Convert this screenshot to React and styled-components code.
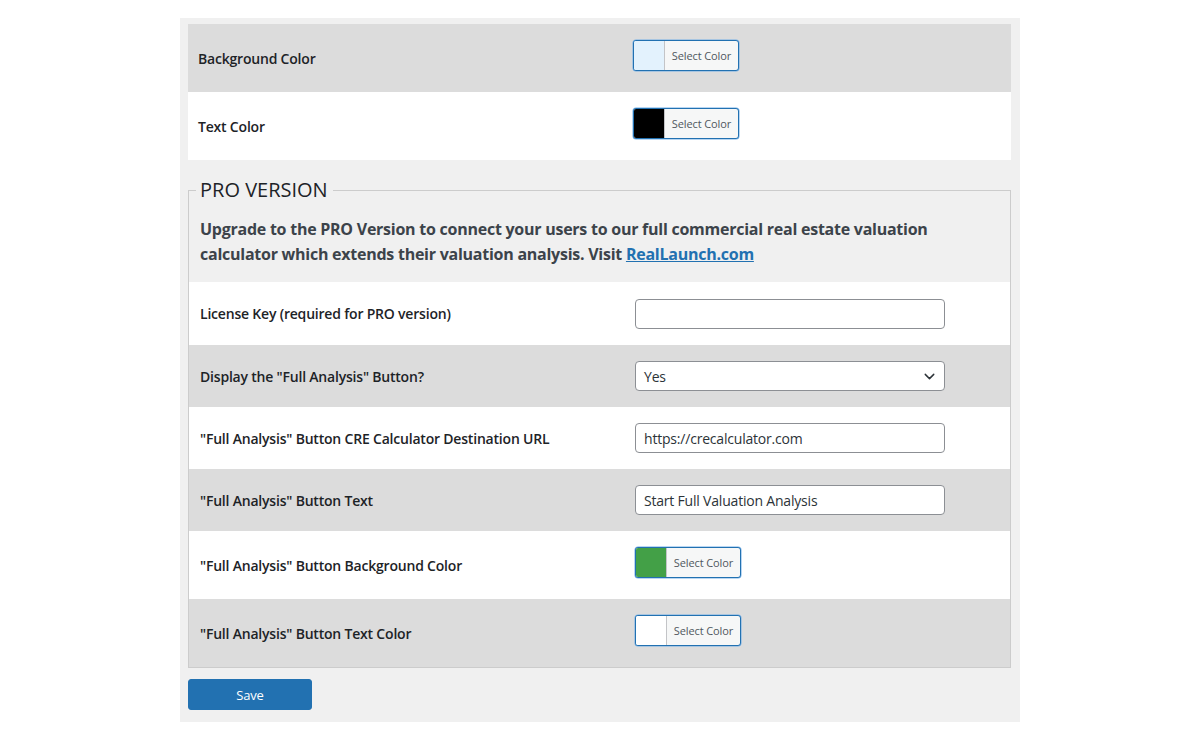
import React from 'react';
import styled, { createGlobalStyle } from 'styled-components';
import { ChevronDown } from 'lucide-react';

const GlobalStyle = createGlobalStyle`
  html, body {
    margin: 0;
    padding: 0;
    background: #ffffff;
  }
  body {
    font-family: "Open Sans", "Noto Sans", "Liberation Sans", sans-serif;
    color: #1d2327;
  }
  * {
    box-sizing: border-box;
  }
`;

const topRows = [
  { label: 'Background Color', swatch: '#e3f2fd' },
  { label: 'Text Color', swatch: '#000000' },
];

const SettingsPage = () => {
  return (
    <>
      <GlobalStyle />
      <Wrap>
        <Table>
          {topRows.map((row, i) => (
            <Row key={row.label} $grey={i % 2 === 0} $tall>
              <Label>{row.label}</Label>
              <Cell>
                <ColorPicker swatch={row.swatch} />
              </Cell>
            </Row>
          ))}
        </Table>

        <ProBox>
          <Legend>PRO VERSION</Legend>
          <Intro>
            Upgrade to the PRO Version to connect your users to our full commercial real estate valuation
            calculator which extends their valuation analysis. Visit <Link href="#">RealLaunch.com</Link>
          </Intro>

          <Row $inset $first>
            <Label $inset>License Key (required for PRO version)</Label>
            <Cell>
              <TextInput type="text" defaultValue="" />
            </Cell>
          </Row>
          <Row $inset $grey>
            <Label $inset>Display the "Full Analysis" Button?</Label>
            <Cell>
              <SelectBox>
                <span>Yes</span>
                <ChevronDown size={17} strokeWidth={2} color="#2c3338" />
              </SelectBox>
            </Cell>
          </Row>
          <Row $inset>
            <Label $inset>"Full Analysis" Button CRE Calculator Destination URL</Label>
            <Cell>
              <TextInput type="text" defaultValue="https://crecalculator.com" />
            </Cell>
          </Row>
          <Row $inset $grey>
            <Label $inset>"Full Analysis" Button Text</Label>
            <Cell>
              <TextInput type="text" defaultValue="Start Full Valuation Analysis" />
            </Cell>
          </Row>
          <Row $inset $tall>
            <Label $inset>"Full Analysis" Button Background Color</Label>
            <Cell>
              <ColorPicker swatch="#43a047" />
            </Cell>
          </Row>
          <Row $inset $tall $grey>
            <Label $inset>"Full Analysis" Button Text Color</Label>
            <Cell>
              <ColorPicker swatch="#ffffff" />
            </Cell>
          </Row>
        </ProBox>

        <SaveButton type="button">Save</SaveButton>
      </Wrap>
    </>
  );
};

const ColorPicker = ({ swatch }) => (
  <PickerButton type="button">
    <Swatch $color={swatch} />
    <PickerText>Select Color</PickerText>
  </PickerButton>
);

const Wrap = styled.div`
  width: 840px;
  margin: 18px 0 0 180px;
  padding: 6px 9px 12px 8px;
  background: #f0f0f0;
`;

const Table = styled.div`
  display: flex;
  flex-direction: column;
`;

const Row = styled.div`
  display: grid;
  grid-template-columns: ${(p) => (p.$inset ? '446px' : '445px')} 1fr;
  align-items: center;
  min-height: ${(p) => (p.$tall ? '68px' : p.$first ? '63px' : '62px')};
  background: ${(p) => (p.$grey ? '#dcdcdc' : '#ffffff')};
`;

const Label = styled.div`
  padding-left: ${(p) => (p.$inset ? '11px' : '10px')};
  font-size: 14px;
  font-weight: 600;
  color: #1d2327;
  letter-spacing: -0.2px;
`;

const Cell = styled.div`
  display: flex;
  align-items: center;
`;

const PickerButton = styled.button`
  display: flex;
  align-items: stretch;
  width: 106px;
  height: 31px;
  margin: 0 0 6px;
  padding: 0;
  border: 1px solid #2271b1;
  border-radius: 3px;
  overflow: hidden;
  background: #f6f7f7;
  box-shadow: 0 0 0 0.5px #72aee6;
  cursor: pointer;
`;

const Swatch = styled.span`
  width: 31px;
  background: ${(p) => p.$color};
  border-right: 1px solid #c3c4c7;
`;

const PickerText = styled.span`
  flex: 1;
  display: flex;
  align-items: center;
  justify-content: center;
  font-family: "Open Sans", "Noto Sans", sans-serif;
  font-size: 11px;
  color: #50575e;
  letter-spacing: -0.1px;
`;

const ProBox = styled.fieldset`
  margin: 18px 0 0;
  padding: 0;
  border: 1px solid #cccccc;
  min-width: 0;
`;

const Legend = styled.legend`
  margin-left: 7px;
  padding: 0 5px 0 4px;
  font-size: 20px;
  line-height: 24px;
  font-weight: 400;
  color: #1d2327;
  letter-spacing: 0;
`;

const Intro = styled.p`
  margin: 0;
  padding: 15px 12px 15px 11px;
  font-size: 16px;
  line-height: 25px;
  font-weight: 700;
  color: #3c434a;
  letter-spacing: -0.25px;
`;

const Link = styled.a`
  color: #2271b1;
  text-decoration: underline;
`;

const TextInput = styled.input`
  width: 310px;
  height: 30px;
  padding: 0 8px;
  border: 1px solid #8c8f94;
  border-radius: 4px;
  background: #ffffff;
  font-family: "Open Sans", "Noto Sans", sans-serif;
  font-size: 14px;
  color: #2c3338;
  letter-spacing: -0.2px;
  outline: none;
`;

const SelectBox = styled.div`
  display: flex;
  align-items: center;
  justify-content: space-between;
  width: 310px;
  height: 30px;
  padding: 0 6px 0 8px;
  border: 1px solid #8c8f94;
  border-radius: 4px;
  background: #ffffff;
  font-size: 14px;
  color: #2c3338;
  letter-spacing: -0.2px;
`;

const SaveButton = styled.button`
  display: block;
  width: 124px;
  height: 31px;
  margin-top: 11px;
  border: 1px solid #2271b1;
  border-radius: 3px;
  background: #2271b1;
  color: #ffffff;
  font-family: "Open Sans", "Noto Sans", sans-serif;
  font-size: 13px;
  letter-spacing: -0.2px;
  cursor: pointer;
`;

export default SettingsPage;
